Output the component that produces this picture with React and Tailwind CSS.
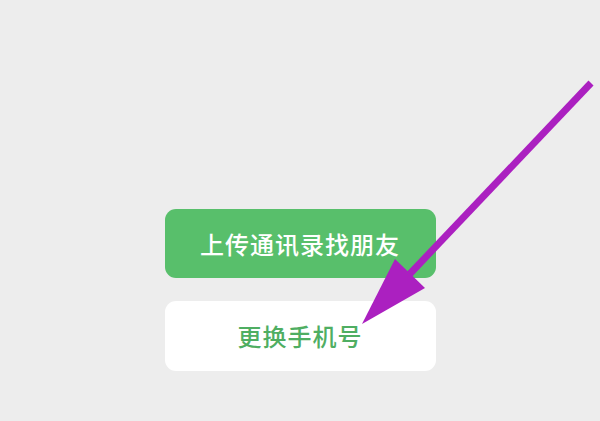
export default function App() {
  return (
    <div
      className="relative w-[600px] h-[421px] overflow-hidden bg-[#ededed]"
      style={{ fontFamily: '"Noto Sans CJK SC", "Noto Sans", sans-serif' }}
    >
      <div className="flex flex-col items-center pt-[209px] gap-[23px]">
        <button className="w-[271px] h-[69px] rounded-[11px] bg-[#58bf6b] text-white text-[24px] font-medium tracking-[1px]">
          上传通讯录找朋友
        </button>
        <button className="w-[271px] h-[70px] rounded-[11px] bg-white text-[#4fae62] text-[24px] font-medium tracking-[1px]">
          更换手机号
        </button>
      </div>
      <svg
        className="absolute inset-0 pointer-events-none"
        width="600"
        height="421"
        viewBox="0 0 600 421"
      >
        <line x1="591" y1="83" x2="405" y2="279" stroke="#ab20c0" strokeWidth="7" />
        <polygon points="362,324 395,259 425,288" fill="#ab20c0" />
      </svg>
    </div>
  );
}
